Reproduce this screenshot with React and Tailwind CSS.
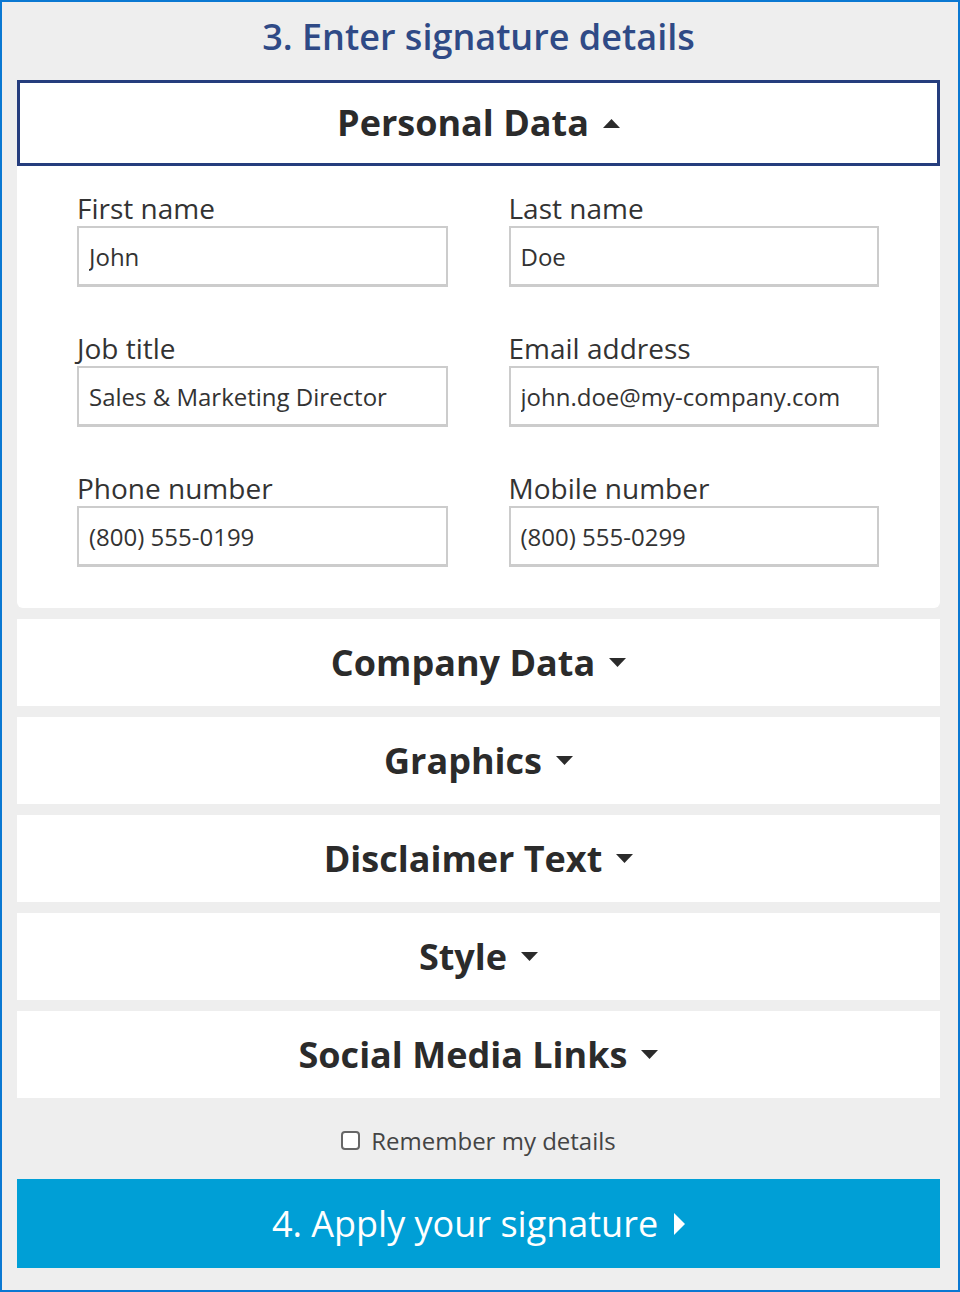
import { useState } from "react";

const fields = [
  { label: "First name", value: "John" },
  { label: "Last name", value: "Doe" },
  { label: "Job title", value: "Sales & Marketing Director" },
  { label: "Email address", value: "john.doe@my-company.com" },
  { label: "Phone number", value: "(800) 555-0199" },
  { label: "Mobile number", value: "(800) 555-0299" },
];

const sections = ["Company Data", "Graphics", "Disclaimer Text", "Style", "Social Media Links"];

function Caret({ up }) {
  return (
    <svg width="17" height="9" viewBox="0 0 17 9" className="ml-[14px] shrink-0">
      {up ? <polygon points="0,9 8.5,0 17,9" fill="#2b2b2b" /> : <polygon points="0,0 17,0 8.5,9" fill="#2b2b2b" />}
    </svg>
  );
}

export default function App() {
  // ==== form state ====
  const [values, setValues] = useState(fields.map((f) => f.value));
  const [remember, setRemember] = useState(false);

  return (
    <div
      className="w-[960px] h-[1292px] border-2 border-[#0a78d2] bg-[#eeeeee] flex flex-col pl-[15px] pr-[18px]"
      style={{ fontFamily: '"Open Sans", "Liberation Sans", sans-serif' }}
    >
      {/* ===== Title ===== */}
      <h1 className="h-[78px] flex items-center justify-center text-[36px] font-semibold text-[#2f4a86] pb-[8px]">
        3. Enter signature details
      </h1>

      {/* ===== Personal Data (open) ===== */}
      <div className="h-[86px] border-[3px] border-[#253d7d] bg-white flex items-center justify-center">
        <span className="text-[36px] font-bold text-[#2b2b2b]">Personal Data</span>
        <Caret up />
      </div>
      <div className="bg-white rounded-b-[6px] pt-[24px] pb-[41px] pl-[60px] pr-[61px] grid grid-cols-2 gap-x-[61px] gap-y-[43px]">
        {fields.map((f, i) => (
          <div key={f.label} className="flex flex-col">
            <label className="text-[28px] leading-[36px] text-[#333]">{f.label}</label>
            <input
              value={values[i]}
              onChange={(e) => setValues((prev) => prev.map((v, j) => (j === i ? e.target.value : v)))}
              className="h-[61px] border-2 border-b-[3px] border-[#cccccc] px-[10px] text-[24px] text-[#333] outline-none bg-white"
            />
          </div>
        ))}
      </div>

      {/* ===== Collapsed sections ===== */}
      <div className="flex flex-col gap-[11px] mt-[11px]">
        {sections.map((s) => (
          <div key={s} className="h-[87px] bg-white flex items-center justify-center">
            <span className="text-[36px] font-bold text-[#2b2b2b]">{s}</span>
            <Caret />
          </div>
        ))}
      </div>

      {/* ===== Remember ===== */}
      <label className="h-[81px] flex items-center justify-center gap-[11px] text-[24px] text-[#444] pt-[4px]">
        <input
          type="checkbox"
          checked={remember}
          onChange={(e) => setRemember(e.target.checked)}
          className="w-[19px] h-[19px] appearance-none border-2 border-[#666] rounded-[4px] bg-white"
        />
        Remember my details
      </label>

      {/* ===== Apply button ===== */}
      <button className="h-[89px] bg-[#009fd6] text-white text-[36px] flex items-center justify-center">
        4. Apply your signature
        <svg width="11" height="22" viewBox="0 0 11 22" className="ml-[16px]">
          <polygon points="0,0 11,11 0,22" fill="white" />
        </svg>
      </button>
    </div>
  );
}
